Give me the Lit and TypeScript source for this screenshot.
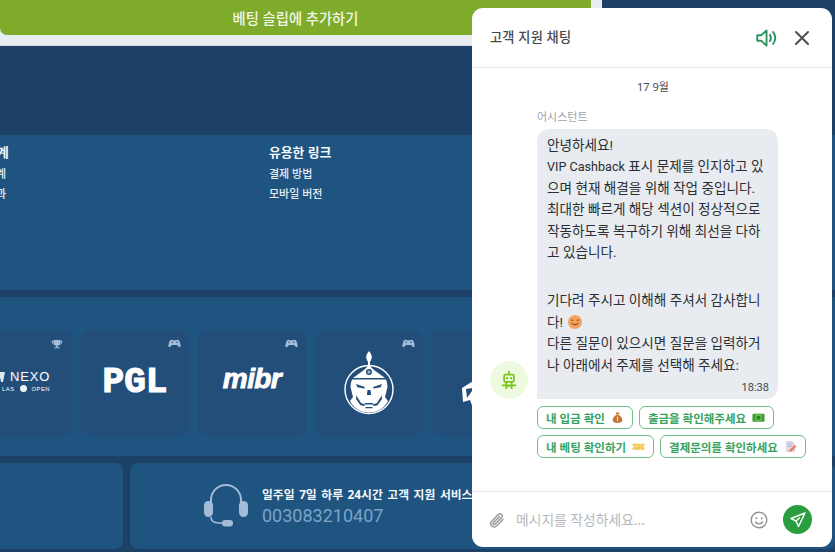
import { LitElement, html, css, svg } from "lit";
import { customElement } from "lit/decorators.js";

const pad = svg`<path d="M4.200 1.500c.9 0 1.200.6 2 .6h3.600c.8 0 1.100-.6 2-.6 1.500 0 2.300 1.300 2.800 3.100l.9 3.600c.3 1.300-.3 2.300-1.300 2.300-.8 0-1.300-.6-1.900-1.400L11 7.800H5L3.700 9.100C3.100 9.900 2.600 10.500 1.800 10.500.8 10.500.2 9.500.5 8.200l.9-3.600C1.900 2.800 2.700 1.500 4.200 1.500Z" fill="currentColor"/><circle cx="5" cy="4.400" r=".9" fill="#234e7a"/><circle cx="11" cy="4.400" r=".9" fill="#234e7a"/>`;
const trophy = svg`<path d="M3.500 1h9v1.200h2.500v1.600c0 2-1.400 3.400-3.500 3.600-.6 1-1.400 1.500-2.500 1.700v1.800h2.500V12H4.500v-1.100H7V9.100C5.900 8.900 5.100 8.400 4.500 7.400 2.400 7.200 1 5.800 1 3.800V2.200h2.500V1Zm-1.200 2.400v.5c0 1.100.6 1.900 1.600 2.200-.2-.8-.3-1.700-.4-2.700H2.300Zm11.400 0h-1.200c-.1 1-.2 1.900-.4 2.700 1-.3 1.600-1.100 1.600-2.200v-.5Z" fill="currentColor"/>`;

const emojiBag = html`<svg class="emo" viewBox="0 0 14 14"><path d="M5 1.500h4L8.200 4c2.600 1.500 4 3.500 4 5.700 0 2-1.800 3.300-5.200 3.300S1.800 11.700 1.800 9.700C1.800 7.500 3.200 5.500 5.800 4L5 1.500Z" fill="#c2773a"/><rect x="5.400" y="3.500" width="3.200" height="1" fill="#e8c07a"/><path d="M7 6v5" stroke="#f0d9a8" stroke-width="1.200"/></svg>`;
const emojiCash = html`<svg class="emo" viewBox="0 0 14 14"><rect x=".5" y="3" width="13" height="8.500" rx="1" fill="#3f9b3a"/><rect x="3.500" y="3" width="7" height="8.500" fill="#66bb4a"/><circle cx="7" cy="7.200" r="2.100" fill="#2f7d32"/></svg>`;
const emojiTicket = html`<svg class="emo" viewBox="0 0 14 14"><path d="M.5 4h13v2a1.200 1.200 0 0 0 0 2.400V10.500H.5V8.400a1.200 1.200 0 0 0 0-2.400V4Z" fill="#f4c84f"/><path d="M9.500 4.500v5.500" stroke="#fff2c0" stroke-dasharray="1 1"/><rect x="2.500" y="6" width="5" height="1" fill="#fff0b8"/></svg>`;
const emojiMemo = html`<svg class="emo" viewBox="0 0 14 14"><path d="M2 1h7l3 3v9H2V1Z" fill="#dcd6e8"/><path d="M4 4h4M4 6.500h5" stroke="#a99fc0" stroke-width=".8"/><path d="M11.500 5.500l2 1.500-5.500 5.500-2.500.5.500-2.500 5.500-5Z" fill="#ee7e5c"/></svg>`;

@customElement("app-root")
export class AppRoot extends LitElement {
  static styles = css`
    :host {
      display: block;
      width: 835px;
      height: 552px;
      position: relative;
      overflow: hidden;
      background: #1c4066;
      font-family: "Noto Sans", "Noto Sans CJK KR", sans-serif;
    }
    * { box-sizing: border-box; }
    .slip {
      width: 602px;
      height: 46px;
      background: #e8edf1;
      border-bottom: 1px solid #cfd6dc;
      padding-right: 11px;
    }
    .betbtn {
      height: 35px;
      background: #7fab2b;
      border-radius: 0 0 7px 7px;
      color: #f2f6e8;
      font-size: 14.300px;
      font-weight: 500;
      display: flex;
      align-items: center;
      justify-content: center;
    }
    .navy { height: 89px; background: #1c4066; }
    .links {
      height: 155px;
      background: #1f5480;
      display: grid;
      grid-template-columns: 269px 1fr;
      padding-top: 8px;
      color: #e4ecf4;
    }
    .col { display: flex; flex-direction: column; align-items: flex-start; }
    .col h4 {
      margin: 0 0 3px;
      font-size: 12.800px;
      line-height: 18px;
      font-weight: 700;
      color: #f4f7fa;
    }
    .col a { font-size: 11px; line-height: 20px; font-weight: 500; }
    .col.cut { margin-left: -3px; }
    .col.cut a { margin-left: -1px; }
    .band { height: 7px; background: #1c4066; }
    .tiles {
      height: 159px;
      background: #1f5480;
      padding-top: 33px;
      display: flex;
      gap: 9px;
      margin-left: -36px;
      width: 900px;
    }
    .tile {
      position: relative;
      width: 108px;
      height: 106px;
      flex: none;
      border-radius: 9px;
      background: #234e7a;
      display: flex;
      align-items: center;
      justify-content: center;
      color: #fff;
    }
    .badge {
      position: absolute;
      top: 8px;
      right: 8px;
      width: 13px;
      height: 11px;
      color: #a3bdd8;
    }
    .badge.tr { right: 9px; width: 12px; height: 12px; top: 8px; }
    .nexo { width: 64px; display: flex; flex-direction: column; align-items: flex-end; font-family: "Liberation Sans", sans-serif; margin-top: -2px; }
    .nexo .l1 { display: flex; align-items: center; width: 100%; justify-content: space-between; padding-left: 12px; }
    .nexo .l1 svg { width: 7px; height: 10px; }
    .nexo b { font-weight: 400; font-size: 12px; line-height: 13px; letter-spacing: .8px; transform: scaleX(1.08); transform-origin: right; }
    .nexo .l2 { font-size: 5.800px; line-height: 10px; letter-spacing: .5px; display: flex; align-items: center; gap: 5px; }
    .nexo i { width: 7px; height: 7px; border-radius: 50%; background: #f0f4f8; }
    .pgl { font: 700 36px/26px "Liberation Mono", monospace; -webkit-text-stroke: 1.200px #fff; }
    .mibr { font: italic 700 28px/28px "Liberation Sans", sans-serif; letter-spacing: -.6px; margin-top: -8px; -webkit-text-stroke: .9px #fff; }
    .foot {
      display: grid;
      grid-template-columns: 123px 1fr;
      gap: 7px;
      height: 86px;
    }
    .fcard { background: #1f5480; border-radius: 0 8px 8px 0; }
    .fcard.sup {
      border-radius: 8px;
      display: flex;
      align-items: center;
      padding-left: 74px;
      gap: 14px;
      overflow: hidden;
    }
    .sup svg { width: 44px; height: 44px; flex: none; }
    .sup b { display: block; font-size: 11.800px; word-spacing: 1.500px; line-height: 18px; font-weight: 700; color: #f4f7fa; white-space: nowrap; }
    .sup span { display: block; font: 400 18px/24px Roboto, sans-serif; color: #7ba3c9; margin-top: 1px; }

    .chat {
      position: absolute;
      left: 472px;
      top: 8px;
      width: 360px;
      height: 539px;
      background: #fff;
      border-radius: 11px;
      display: flex;
      flex-direction: column;
      color: #2b2f33;
    }
    .head {
      height: 60px;
      flex: none;
      border-bottom: 1px solid #e6e9ec;
      display: flex;
      align-items: center;
      padding: 0 22px 2px 18px;
    }
    .head h3 { margin: 0; flex: 1; font-size: 13.200px; font-weight: 500; color: #45494e; letter-spacing: .2px; padding-bottom: 1px; }
    .head svg.spk { width: 24px; height: 24px; color: #2a9460; margin-right: 16px; margin-top: 2px; }
    .head svg.x { width: 16px; height: 16px; color: #4a4f55; margin-top: 2px; }
    .body { flex: 1; padding: 11px 0 0 18px; display: flex; flex-direction: column; }
    .date { text-align: center; font-size: 11px; line-height: 16px; color: #44484d; padding-right: 16px; }
    .msg { display: grid; grid-template-columns: 38px 1fr; column-gap: 9px; margin-top: 15px; align-items: end; }
    .who { grid-column: 2; font-size: 11px; line-height: 14px; color: #a0a4a8; margin-bottom: 5px; }
    .avatar {
      width: 38px; height: 38px; border-radius: 50%;
      background: #eefadf; display: flex; align-items: center; justify-content: center; color: #7cc520;
    }
    .avatar svg { width: 16px; height: 20px; }
    .bubble {
      width: 241px;
      height: 270px;
      background: #e8ebef;
      border-radius: 12px 12px 12px 0;
      padding: 5.500px 10px 0;
      font-family: Roboto, "Noto Sans CJK KR", sans-serif;
      font-size: 13.600px;
      line-height: 21.600px;
      color: #2b2f33;
      position: relative;
      white-space: nowrap;
    }
    .latin { font-size: 12.600px; }
    .gap { height: 26px; }
    .smile { display: inline-block; width: 14px; height: 14px; vertical-align: -2px; margin-left: 2px; }
    .time { position: absolute; right: 9px; bottom: 3px; font-size: 11px; line-height: 16px; color: #44484d; }
    .chips { margin: 7px 0 0 47px; display: flex; flex-direction: column; gap: 6px; }
    .row { display: flex; gap: 6px; }
    .chip {
      height: 23px;
      border: 1px solid #6fc08a;
      border-radius: 6px;
      padding: 0 8px;
      display: flex;
      align-items: center;
      gap: 6px;
      font-size: 11.500px;
      font-weight: 700;
      color: #35a35f;
      white-space: nowrap;
    }
    .emo { width: 13px; height: 13px; flex: none; }
    .input {
      height: 56px;
      flex: none;
      border-top: 1px solid #e6e9ec;
      display: flex;
      align-items: center;
      padding: 0 20px 0 17px;
    }
    .input .clip { width: 16px; height: 17px; color: #9a9ea3; margin-right: 11px; margin-top: 2px; }
    .ph { flex: 1; font-size: 13.800px; color: #b4b8bc; margin-bottom: 1px; }
    .input .emoji { width: 18px; height: 18px; color: #8f9499; margin-right: 15px; }
    .send { width: 29px; height: 29px; border-radius: 50%; background: #2a9d3e; display: flex; align-items: center; justify-content: center; color: #fff; }
    .send svg { width: 16px; height: 16px; }
  `;

  render() {
    return html`
      <div class="slip"><div class="betbtn">베팅 슬립에 추가하기</div></div>
      <div class="navy"></div>
      <div class="links">
        <div class="col cut"><h4>계</h4><a>계</a><a>과</a></div>
        <div class="col"><h4>유용한 링크</h4><a>결제 방법</a><a>모바일 버전</a></div>
      </div>
      <div class="band"></div>
      <div class="tiles">
        <div class="tile">
          <svg class="badge tr" viewBox="0 0 16 13">${trophy}</svg>
          <div class="nexo">
            <div class="l1"><svg viewBox="0 0 7 10"><path d="M1 0h6L5 10H3L1 0Z" fill="#dfe7ef"/></svg><b>NEXO</b></div>
            <div class="l2">LAS <i></i> OPEN</div>
          </div>
        </div>
        <div class="tile"><svg class="badge" viewBox="0 0 16 12">${pad}</svg><div class="pgl">PGL</div></div>
        <div class="tile"><svg class="badge" viewBox="0 0 16 12">${pad}</svg><div class="mibr">mibr</div></div>
        <div class="tile">
          <svg class="badge" viewBox="0 0 16 12">${pad}</svg>
          <svg width="50" height="64" viewBox="0 0 50 64">
            <path d="M25 0c2 2.500 3 4.500 2.800 6.500-.2 1.800-1 3-1.800 4.500v3h-2v-3c-.8-1.500-1.600-2.700-1.800-4.500C22 4.500 23 2.500 25 0Z" fill="#fff"/>
            <circle cx="25" cy="38.500" r="24" fill="none" stroke="#fff" stroke-width="1.400"/>
            <path d="M25 14l5 5 11 8H9l11-8 5-5Z" fill="#fff"/>
            <circle cx="25" cy="21" r="3" fill="#234e7a"/><circle cx="25" cy="21" r="1.600" fill="#fff" fill-opacity=".6"/>
            <path d="M8 28.500h34c1 2.500 1.500 5 1.500 7.500L41 46l3 4c-3.500 7-10.500 11.500-19 11.500S9.500 57 6 50l3-4-2.500-10c0-2.500.5-5 1.500-7.500Z" fill="#fff"/>
            <path d="M12 33l9 3-.6 1.500-7-1.200L12 33ZM38 33l-9 3 .6 1.500 7-1.200L38 33ZM12 44l5 8 4 1.500-.5 1.500-4-.8-4.500-6.200.5-4ZM38 44l-5 8-4 1.500.5 1.500 4-.8 4.500-6.200-.5-4ZM21 52h8l.5 1.500h-9L21 52ZM21.500 56h7v1.300h-7ZM23.500 39h3l.6 5h-4.200l.6-5Z" fill="#234e7a"/>
          </svg>
        </div>
        <div class="tile">
          <svg width="52" height="50" viewBox="0 0 52 50">
            <path d="M2 30L18 20l4 10 10-3-4 9 8 1-9 6 5 7-14-4-5 4-3-8-7 2-1-14Zm4 1l1 9 5-7 6 3 1-7-13 2Z" fill="#fff" fill-rule="evenodd"/>
          </svg>
        </div>
      </div>
      <div class="band"></div>
      <div class="foot">
        <div class="fcard"></div>
        <div class="fcard sup">
          <svg viewBox="0 0 44 44" fill="none">
            <path d="M7 22v-6a15 15 0 0 1 30 0v6" stroke="#a3bdd8" stroke-width="2"/>
            <rect x="0" y="17" width="9" height="16" rx="4.500" fill="#a3bdd8"/>
            <rect x="35" y="17" width="9" height="16" rx="4.500" fill="#a3bdd8"/>
            <path d="M7 33c0 4 3 6 8 6h6" stroke="#a3bdd8" stroke-width="1.600"/>
            <rect x="18" y="36" width="11" height="6.500" rx="3.200" fill="#a3bdd8"/>
          </svg>
          <div><b>일주일 7일 하루 24시간 고객 지원 서비스</b><span>003083210407</span></div>
        </div>
      </div>

      <section class="chat">
        <header class="head">
          <h3>고객 지원 채팅</h3>
          <svg class="spk" viewBox="0 0 22 22" fill="none" stroke="currentColor" stroke-width="1.700" stroke-linejoin="round" stroke-linecap="round">
            <path d="M3 8.500v5h3.500l5 4.500V4L6.500 8.500H3Z"/>
            <path d="M14.500 8c1.200 1.800 1.200 4.200 0 6"/>
            <path d="M17.500 5.500c2.400 3.300 2.400 7.700 0 11"/>
          </svg>
          <svg class="x" viewBox="0 0 16 16" fill="none" stroke="currentColor" stroke-width="2" stroke-linecap="round"><path d="M2 2l12 12M14 2L2 14"/></svg>
        </header>
        <div class="body">
          <div class="date">17 9월</div>
          <div class="msg">
            <div class="who">어시스턴트</div>
            <div class="avatar">
              <svg viewBox="0 0 18 22" fill="none" stroke="currentColor" stroke-width="2">
                <path d="M9 1v3.500"/>
                <rect x="3.500" y="5" width="11" height="8" rx="1.500"/>
                <circle cx="6.700" cy="9" r="1.300" fill="currentColor" stroke="none"/><circle cx="11.300" cy="9" r="1.300" fill="currentColor" stroke="none"/>
                <path d="M6 13v8M12 13v8M1 17h16M6 17.500h6"/>
              </svg>
            </div>
            <div class="bubble">
              안녕하세요!<br>
              <span class="latin">VIP Cashback</span> 표시 문제를 인지하고 있<br>
              으며 현재 해결을 위해 작업 중입니다.<br>
              최대한 빠르게 해당 섹션이 정상적으로<br>
              작동하도록 복구하기 위해 최선을 다하<br>
              고 있습니다.
              <div class="gap"></div>
              기다려 주시고 이해해 주셔서 감사합니<br>
              다! <svg class="smile" viewBox="0 0 14 14"><circle cx="7" cy="7" r="7" fill="#f4a35c"/><path d="M3 5.500q1.200-1.400 2.400 0M8.600 5.500q1.200-1.400 2.400 0" stroke="#6b3a1a" fill="none" stroke-width=".9"/><path d="M3.500 8q3.500 3.500 7 0" stroke="#6b3a1a" fill="none" stroke-width="1"/></svg><br>
              다른 질문이 있으시면 질문을 입력하거<br>
              나 아래에서 주제를 선택해 주세요:
              <span class="time">18:38</span>
            </div>
          </div>
          <div class="chips">
            <div class="row">
              <div class="chip">내 입금 확인 ${emojiBag}</div>
              <div class="chip">출금을 확인해주세요 ${emojiCash}</div>
            </div>
            <div class="row">
              <div class="chip">내 베팅 확인하기 ${emojiTicket}</div>
              <div class="chip">결제문의를 확인하세요 ${emojiMemo}</div>
            </div>
          </div>
        </div>
        <footer class="input">
          <svg class="clip" viewBox="0 0 16 17" fill="none" stroke="currentColor" stroke-width="1.500" stroke-linecap="round"><path d="M14 7.500l-6.500 6.500a3.400 3.400 0 0 1-4.800-4.800l7-7a2.300 2.300 0 0 1 3.200 3.200l-6.800 6.800a1.100 1.100 0 0 1-1.600-1.600L10.500 4.500"/></svg>
          <div class="ph">메시지를 작성하세요...</div>
          <svg class="emoji" viewBox="0 0 18 18" fill="none" stroke="currentColor" stroke-width="1.400"><circle cx="9" cy="9" r="7.800"/><circle cx="6.300" cy="7.200" r="1" fill="currentColor" stroke="none"/><circle cx="11.700" cy="7.200" r="1" fill="currentColor" stroke="none"/><path d="M5.500 11c1.800 2.500 5.200 2.500 7 0" stroke-linecap="round"/></svg>
          <div class="send"><svg viewBox="0 0 16 16" fill="none" stroke="currentColor" stroke-width="1.500" stroke-linejoin="round"><path d="M15 1L1 6.500l5 2.500 2.500 5.500L15 1ZM6 9l4-3.500"/></svg></div>
        </footer>
      </section>
    `;
  }
}
